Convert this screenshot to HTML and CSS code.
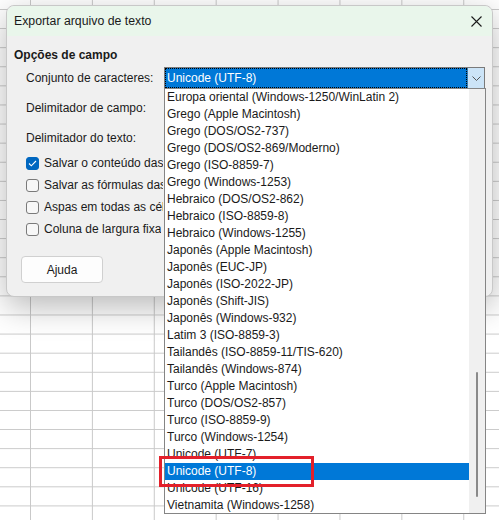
FILE: index.html
```html
<!DOCTYPE html>
<html lang="pt-br">

<head>
    <meta charset="UTF-8">
    <meta name="viewport" content="width=device-width, initial-scale=1.0">
    <title>Exportar arquivo de texto</title>
    <link rel="stylesheet" href="styles.css">
</head>

<body>
    <div class="dialog">
        <div class="titlebar">
            <span>Exportar arquivo de texto</span>
            <svg class="close" width="11" height="11" viewBox="0 0 11 11">
                <path d="M0.5 0.5 L10.5 10.5 M10.5 0.5 L0.5 10.5" stroke="#1a1a1a" stroke-width="1.1" fill="none" />
            </svg>
        </div>
        <div class="content">
            <div class="group-title">Opções de campo</div>
            <div class="row">
                <label>Conjunto de caracteres:</label>
                <div class="combo">
                    <div class="combo-value"><span>Unicode (UTF-8)</span></div>
                    <div class="combo-btn">
                        <svg width="9" height="5" viewBox="0 0 9 5">
                            <path d="M0.5 0.5 L4.5 4.5 L8.5 0.5" stroke="#555" stroke-width="1" fill="none" />
                        </svg>
                    </div>
                    <div class="list">
                        <ul class="items">
                            <li>Europa oriental (Windows-1250/WinLatin 2)</li>
                            <li>Grego (Apple Macintosh)</li>
                            <li>Grego (DOS/OS2-737)</li>
                            <li>Grego (DOS/OS2-869/Moderno)</li>
                            <li>Grego (ISO-8859-7)</li>
                            <li>Grego (Windows-1253)</li>
                            <li>Hebraico (DOS/OS2-862)</li>
                            <li>Hebraico (ISO-8859-8)</li>
                            <li>Hebraico (Windows-1255)</li>
                            <li>Japonês (Apple Macintosh)</li>
                            <li>Japonês (EUC-JP)</li>
                            <li>Japonês (ISO-2022-JP)</li>
                            <li>Japonês (Shift-JIS)</li>
                            <li>Japonês (Windows-932)</li>
                            <li>Latim 3 (ISO-8859-3)</li>
                            <li>Tailandês (ISO-8859-11/TIS-620)</li>
                            <li>Tailandês (Windows-874)</li>
                            <li>Turco (Apple Macintosh)</li>
                            <li>Turco (DOS/OS2-857)</li>
                            <li>Turco (ISO-8859-9)</li>
                            <li>Turco (Windows-1254)</li>
                            <li>Unicode (UTF-7)</li>
                            <li class="selected">Unicode (UTF-8)</li>
                            <li>Unicode (UTF-16)</li>
                            <li>Vietnamita (Windows-1258)</li>
                        </ul>
                        <div class="scrollbar">
                            <div class="thumb"></div>
                        </div>
                        <div class="highlight"></div>
                    </div>
                </div>
            </div>
            <div class="row">
                <label>Delimitador de campo:</label>
            </div>
            <div class="row">
                <label>Delimitador do texto:</label>
            </div>
            <div class="checks">
                <div class="check"><span class="box checked">
                        <svg width="9" height="7" viewBox="0 0 9 7">
                            <path d="M1 3.5 L3.3 5.8 L8 1" stroke="#fff" stroke-width="1.1" fill="none" />
                        </svg></span><span class="check-text">Salvar o conteúdo das células como mostrado</span></div>
                <div class="check"><span class="box"></span><span class="check-text">Salvar as fórmulas das células</span></div>
                <div class="check"><span class="box"></span><span class="check-text">Aspas em todas as células de texto</span></div>
                <div class="check"><span class="box"></span><span class="check-text">Coluna de largura fixa</span></div>
            </div>
            <button class="btn">Ajuda</button>
        </div>
    </div>
</body>

</html>
```

FILE: styles.css
```css
body {
    margin: 0;
    width: 499px;
    height: 520px;
    overflow: hidden;
    font-family: "Liberation Sans", Arial, sans-serif;
    font-size: 12px;
    color: #1a1a1a;
    background-color: #ffffff;
    background-image:
        linear-gradient(to right, #c9c9c9 1px, transparent 1px),
        linear-gradient(to bottom, #c9c9c9 1px, transparent 1px);
    background-size: 61.9px 100%, 100% 19.1px;
    background-position: 30px 0, 0 9px;
    padding-top: 5px;
    box-sizing: border-box;
}

.dialog {
    position: relative;
    margin-left: 6px;
    width: 487px;
    height: 292px;
    box-sizing: border-box;
    background: #f0f0f0;
    border: 1px solid #c8c8c8;
    border-radius: 8px;
    box-shadow: 0 10px 32px rgba(0, 0, 0, 0.28);
}

.titlebar {
    height: 30px;
    background: #e9f6eb;
    border-radius: 8px 8px 0 0;
    display: flex;
    justify-content: space-between;
    align-items: center;
    padding: 0 10px 0 7px;
    font-size: 12.3px;
}

.content {
    padding: 11px 0 0 7px;
}

.group-title {
    font-weight: bold;
    line-height: 16px;
}

.row {
    display: flex;
    align-items: center;
    height: 30px;
    padding-left: 12px;
}

.row label {
    width: 138px;
}

.combo {
    position: relative;
    display: flex;
    width: 321px;
    height: 22px;
    box-sizing: border-box;
    border: 1px solid #7a7a7a;
    background: #fff;
}

.combo-value {
    flex: 1;
    background: #0078d7;
    color: #fff;
    outline: 1px dotted #000;
    outline-offset: -1px;
    display: flex;
    align-items: center;
    padding-left: 2px;
}

.combo-btn {
    width: 16px;
    background: #cce4f7;
    border-left: 1px solid #3c7fb1;
    display: flex;
    justify-content: center;
    align-items: center;
}

.list {
    position: absolute;
    left: -1px;
    top: 20px;
    width: 322px;
    height: 426px;
    box-sizing: border-box;
    border: 1px solid #858585;
    background: #fff;
    display: flex;
    z-index: 2;
}

.items {
    list-style: none;
    margin: 0;
    padding: 0;
    flex: 1;
}

.items li {
    height: 17px;
    line-height: 17px;
    padding-left: 2px;
    white-space: nowrap;
}

.items li.selected {
    background: #0078d7;
    color: #fff;
}

.scrollbar {
    width: 16px;
    background: #f0f0f0;
    position: relative;
}

.thumb {
    position: absolute;
    left: 7px;
    top: 283px;
    width: 2px;
    height: 125px;
    border-radius: 1px;
    background: #8a8a8a;
}

.highlight {
    position: absolute;
    left: -6px;
    top: 367px;
    width: 155px;
    height: 31px;
    box-sizing: border-box;
    border: 3px solid #e3202a;
}

.checks {
    display: flex;
    flex-direction: column;
    gap: 8px;
    padding: 3px 0 0 12px;
}

.check {
    display: flex;
    align-items: center;
    height: 14px;
    white-space: nowrap;
}

/* the list popup covers the end of these labels */
.check-text {
    max-width: 119px;
    overflow: hidden;
}

.box {
    flex: none;
    width: 13px;
    height: 13px;
    box-sizing: border-box;
    border: 1px solid #7a7a7a;
    border-radius: 3px;
    background: #f7f7f7;
    margin-right: 5px;
    display: flex;
    justify-content: center;
    align-items: center;
}

.box.checked {
    background: #0067c0;
    border-color: #0067c0;
}

.btn {
    margin: 20px 0 0 7px;
    width: 82px;
    height: 27px;
    font-family: inherit;
    font-size: 12px;
    color: #1a1a1a;
    background: #fdfdfd;
    border: 1px solid #d0d0d0;
    border-radius: 4px;
}
```
